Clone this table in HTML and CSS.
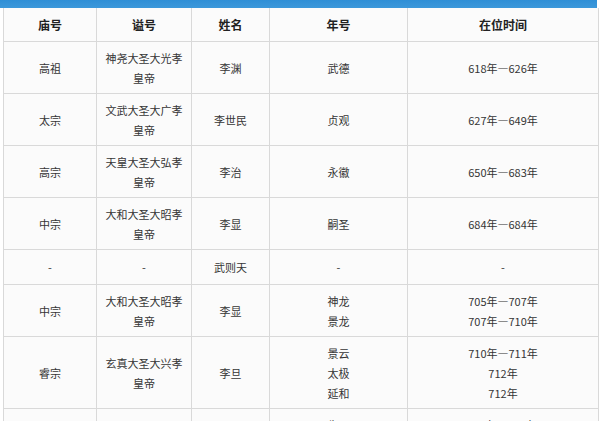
FILE: index.html
```html
<!DOCTYPE html>
<html lang="zh">
<head>
<meta charset="utf-8">
<link rel="stylesheet" href="styles.css">
</head>
<body>
<div class="topbar"></div>
<table class="emperors">
  <colgroup>
    <col class="c1"><col class="c2"><col class="c3"><col class="c4"><col class="c5">
  </colgroup>
  <thead>
    <tr class="head"><th>庙号</th><th>谥号</th><th>姓名</th><th>年号</th><th>在位时间</th></tr>
  </thead>
  <tbody>
    <tr><td>高祖</td><td>神尧大圣大光孝<br>皇帝</td><td>李渊</td><td>武德</td><td>618年—626年</td></tr>
    <tr><td>太宗</td><td>文武大圣大广孝<br>皇帝</td><td>李世民</td><td>贞观</td><td>627年—649年</td></tr>
    <tr><td>高宗</td><td>天皇大圣大弘孝<br>皇帝</td><td>李治</td><td>永徽</td><td>650年—683年</td></tr>
    <tr><td>中宗</td><td>大和大圣大昭孝<br>皇帝</td><td>李显</td><td>嗣圣</td><td>684年—684年</td></tr>
    <tr class="single"><td>-</td><td>-</td><td>武则天</td><td>-</td><td>-</td></tr>
    <tr><td>中宗</td><td>大和大圣大昭孝<br>皇帝</td><td>李显</td><td>神龙<br>景龙</td><td>705年—707年<br>707年—710年</td></tr>
    <tr><td>睿宗</td><td>玄真大圣大兴孝<br>皇帝</td><td>李旦</td><td>景云<br>太极<br>延和</td><td>710年—711年<br>712年<br>712年</td></tr>
    <tr><td>玄宗</td><td>至道大圣大明孝<br>皇帝</td><td>李隆基</td><td>先天<br>开元<br>天宝</td><td>712年—713年<br>713年—741年<br>742年—756年</td></tr>
  </tbody>
</table>
</body>
</html>
```

FILE: styles.css
```css
html, body {
  margin: 0;
  padding: 0;
  background: #ffffff;
}
body {
  width: 600px;
  height: 421px;
  overflow: hidden;
  font-family: "Noto Sans CJK SC", "Noto Sans", sans-serif;
  font-size: 11px;
  color: #353535;
}
.topbar {
  width: 597px;
  height: 8px;
  background: linear-gradient(#2f8fd6, #3c98da);
}
.emperors {
  margin-left: 3px;
  width: 595px;
  border-collapse: collapse;
  table-layout: fixed;
  background: #fbfbfb;
}
.c1 { width: 93px; }
.c2 { width: 95px; }
.c3 { width: 78px; }
.c4 { width: 138px; }
.c5 { width: 191px; }
.emperors th,
.emperors td {
  border: 1px solid #d9d9d9;
  border-top: none;
  text-align: center;
  vertical-align: middle;
  line-height: 20px;
  padding: 6px 0 5px;
}
.emperors th {
  font-weight: bold;
  color: #222;
  padding: 7px 0 6px;
  font-size: 12px;
}
.emperors tr.single td {
  padding: 7px 0;
}
```
